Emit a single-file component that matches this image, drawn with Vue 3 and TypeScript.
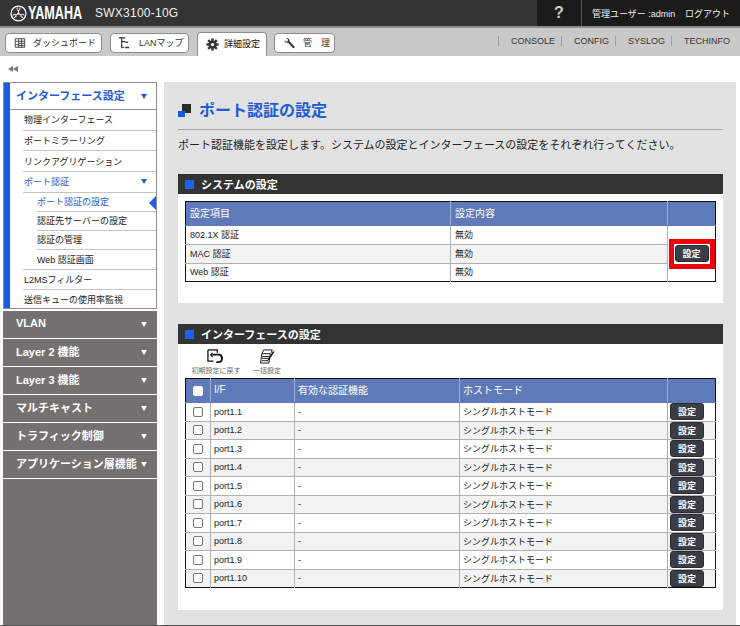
<script setup lang="ts">
const subItems = ['ポート認証の設定', '認証先サーバーの設定', '認証の管理', 'Web 認証画面']
const closedSections = ['VLAN', 'Layer 2 機能', 'Layer 3 機能', 'マルチキャスト', 'トラフィック制御', 'アプリケーション層機能']
const systemRows = [
  { name: '802.1X 認証', value: '無効' },
  { name: 'MAC 認証', value: '無効' },
  { name: 'Web 認証', value: '無効' },
]
const ports = Array.from({ length: 10 }, (_, i) => `port1.${i + 1}`)
const links = ['CONSOLE', 'CONFIG', 'SYSLOG', 'TECHINFO']
</script>

<template>
  <div class="app">
    <header class="top">
      <div class="brand">
        <svg class="emblem" viewBox="0 0 18 18" width="17" height="17">
          <circle cx="9" cy="9" r="7.9" fill="none" stroke="#fff" stroke-width="1.3" />
          <g stroke="#fff" stroke-width="1" fill="none">
            <g v-for="a in [0, 120, 240]" :key="a" :transform="`rotate(${a} 9 9)`">
              <path d="M9 9V5.5M7.6 2.6V5.2Q9 6.5 10.4 5.2V2.6" />
            </g>
          </g>
          <circle cx="9" cy="9" r="1.1" fill="#fff" />
        </svg>
        <span class="yamaha">YAMAHA</span>
        <span class="model">SWX3100-10G</span>
      </div>
      <div class="user">
        <span class="help">?</span>
        <span class="who">管理ユーザー :admin</span>
        <span class="logout">ログアウト</span>
      </div>
    </header>

    <nav class="tabs">
      <div class="tab t1">
        <svg viewBox="0 0 14 14" width="12" height="12"><path d="M1.5 2h11v10h-11zM5.5 2v10M9 2v10M5.5 5h7M5.5 7.5h7M5.5 10h7M1.5 5h4M1.5 9h4" fill="none" stroke="#333" stroke-width="1" /></svg>
        <span>ダッシュボード</span>
      </div>
      <div class="tab t2">
        <svg viewBox="0 0 14 14" width="13" height="13"><path d="M2 1h7M5 1v11M5 5h4M5 11h3" fill="none" stroke="#333" stroke-width="1.2" /><path d="M9 5h3v1.5H9zM9 10.500h4V12H9z" fill="#333" /></svg>
        <span>LANマップ</span>
      </div>
      <div class="tab t3">
        <svg viewBox="0 0 16 16" width="13" height="13">
          <g fill="#333">
            <rect v-for="a in [0, 45, 90, 135]" :key="a" x="6.5" y="0.500" width="3" height="15" :transform="`rotate(${a} 8 8)`" />
          </g>
          <circle cx="8" cy="8" r="4.8" fill="#333" />
          <circle cx="8" cy="8" r="2" fill="#fff" />
        </svg>
        <span>詳細設定</span>
      </div>
      <div class="tab t4">
        <svg viewBox="0 0 14 14" width="13" height="13"><path d="M1.500 3.500 3.500 5.200 5 4.600 5.300 2.800 3.500 1.200Q6 .6 6.800 3L7 4.500 12.800 10.800 11.300 12.500 5.400 6.300 3.800 6.300Q1.500 6 1.500 3.500Z" fill="#333" /></svg>
        <span>管　理</span>
      </div>
      <div class="links">
        <span v-for="l in links" :key="l" class="link">{{ l }}</span>
      </div>
    </nav>

    <div class="collapse"><i class="back"></i><i class="back"></i></div>

    <div class="body">
      <aside class="side">
        <section class="open">
          <div class="open-head"><span>インターフェース設定</span><i class="arrow blue"></i></div>
          <ul class="menu">
            <li>物理インターフェース</li>
            <li>ポートミラーリング</li>
            <li>リンクアグリゲーション</li>
            <li class="current"><span>ポート認証</span><i class="arrow small blue"></i></li>
            <li class="subwrap">
              <ul class="submenu">
                <li v-for="(s, i) in subItems" :key="s" :class="{ selected: i === 0 }">{{ s }}</li>
              </ul>
            </li>
            <li class="tail">L2MSフィルター</li>
            <li class="tail">送信キューの使用率監視</li>
          </ul>
        </section>
        <div v-for="s in closedSections" :key="s" class="closed">
          <span>{{ s }}</span><i class="arrow white"></i>
        </div>
        <div class="side-rest"></div>
      </aside>

      <main class="main">
        <div class="title">
          <span class="title-icon"><i></i><b></b></span>
          <h1>ポート認証の設定</h1>
        </div>
        <p class="desc">ポート認証機能を設定します。システムの設定とインターフェースの設定をそれぞれ行ってください。</p>

        <h2 class="bar"><i></i>システムの設定</h2>
        <div class="panel p1">
          <table class="grid sys">
            <colgroup><col class="c-a" /><col class="c-b" /><col class="c-act" /></colgroup>
            <thead>
              <tr><th>設定項目</th><th>設定内容</th><th></th></tr>
            </thead>
            <tbody>
              <tr v-for="(r, i) in systemRows" :key="r.name" :class="{ alt: i === 1 }">
                <td>{{ r.name }}</td>
                <td>{{ r.value }}</td>
                <td v-if="i === 0" rowspan="3" class="act">
                  <span class="hl"><button class="btn" type="button">設定</button></span>
                </td>
              </tr>
            </tbody>
          </table>
        </div>

        <h2 class="bar second"><i></i>インターフェースの設定</h2>
        <div class="panel p2">
          <div class="tools">
            <div class="tool tool-a">
              <svg viewBox="0 0 18 16" width="17" height="15">
                <path d="M2 1h10v3M2 1v12h6" fill="none" stroke="#111" stroke-width="1.4" />
                <path d="M7 6h7q3 .5 3 4t-4 4h-2" fill="none" stroke="#111" stroke-width="2" />
                <path d="M7 3.500V9L4 6z" fill="#111" />
              </svg>
              <span>初期設定に戻す</span>
            </div>
            <div class="tool tool-b">
              <svg viewBox="0 0 18 16" width="17" height="15">
                <path d="M3 5 5 1h9l-1 3M3 5 1.500 15h9L12 5zM3.500 8h7M3 10h7M2.800 12.500h7" fill="#fff" stroke="#111" stroke-width="1" />
                <path d="M16.500 3 11 11l-2 2 .5-3L15 2.500z" fill="#111" />
              </svg>
              <span>一括設定</span>
            </div>
          </div>
          <table class="grid ports">
            <colgroup><col class="c1" /><col class="c2" /><col class="c3" /><col class="c4" /><col class="c-act" /></colgroup>
            <thead>
              <tr>
                <th class="center"><input class="check head-check" type="checkbox" /></th>
                <th>I/F</th><th>有効な認証機能</th><th>ホストモード</th><th></th>
              </tr>
            </thead>
            <tbody>
              <tr v-for="(p, i) in ports" :key="p" :class="{ alt: i % 2 === 1 }">
                <td class="center"><input class="check" type="checkbox" /></td>
                <td>{{ p }}</td>
                <td>-</td>
                <td>シングルホストモード</td>
                <td class="btn-cell"><button class="btn" type="button">設定</button></td>
              </tr>
            </tbody>
          </table>
        </div>
      </main>
    </div>
  </div>
</template>

<style>
html, body { margin: 0; background: #fff; }
</style>

<style scoped>
.app {
  width: 740px;
  height: 626px;
  overflow: hidden;
  display: flex;
  flex-direction: column;
  box-sizing: border-box;
  border-bottom: 1px solid #555;
  font-family: "Liberation Sans", "Noto Sans CJK JP", sans-serif;
  font-size: 9px;
  color: #222;
  background: #fff;
}
i { display: block; }
.top {
  height: 26px;
  flex: none;
  display: flex;
  justify-content: space-between;
  background: #343434;
  border-bottom: 2px solid #8a8a8a;
}
.brand { display: flex; align-items: center; padding-left: 10px; }
.emblem { flex: none; margin-right: 1px; }
.yamaha {
  color: #fff;
  font-size: 18px;
  font-weight: 700;
  width: 54px;
  transform: scaleX(.7);
  transform-origin: left center;
  white-space: nowrap;
}
.model { color: #eee; font-size: 12px; margin-left: 13px; letter-spacing: .25px; }
.user {
  width: 203px;
  display: flex;
  align-items: center;
  background: #1b1b1b;
  color: #eee;
}
.help {
  width: 44px;
  line-height: 26px;
  text-align: center;
  border-right: 1px solid #555;
  font-size: 16px;
  font-weight: 700;
  color: #ccc;
}
.who { margin-left: 10px; width: 93px; white-space: nowrap; }
.tabs {
  height: 28px;
  flex: none;
  display: flex;
  background: #c9c9c9;
  padding-left: 5px;
  position: relative;
}
.tab {
  box-sizing: border-box;
  margin-top: 5px;
  height: 20px;
  display: flex;
  align-items: center;
  background: #fff;
  border: 1px solid #8c8c8c;
  border-radius: 4px;
  color: #333;
  white-space: nowrap;
}
.tab svg { flex: none; }
.tab span { margin-top: -2px; }
.t1 { width: 97px; padding-left: 8px; gap: 7px; }
.t2 { width: 79px; margin-left: 8px; padding-left: 6px; gap: 9px; }
.t3 {
  width: 70px;
  margin-left: 8px;
  margin-top: 4px;
  height: 24px;
  padding-left: 8px;
  gap: 5px;
  border-bottom: 0;
  border-radius: 4px 4px 0 0;
  color: #111;
}
.t4 { width: 61px; margin-left: 7px; padding-left: 8px; gap: 7px; }
.links { margin-left: auto; display: flex; align-items: center; padding-right: 10px; height: 25px; }
.link {
  padding-left: 12px;
  padding-right: 6px;
  border-left: 1px solid #999;
  line-height: 10px;
  color: #333;
}
.link:last-child { padding-right: 0; }
.collapse { height: 26px; flex: none; display: flex; align-items: center; padding-left: 8px; padding-bottom: 1px; box-sizing: border-box; }
.back {
  width: 0; height: 0;
  border-top: 3px solid transparent;
  border-bottom: 3px solid transparent;
  border-right: 5px solid #777;
}
.body { flex: 1; min-height: 0; display: flex; }
.side {
  width: 154px;
  margin-left: 3px;
  flex: none;
  display: flex;
  flex-direction: column;
}
.open {
  box-sizing: border-box;
  height: 227px;
  border: 1px solid #8f8f8f;
  position: relative;
  padding-left: 6px;
  background: #fff;
  margin-bottom: 2px;
}
.open::before {
  content: "";
  position: absolute;
  left: 0; top: 0; bottom: 0;
  width: 6px;
  background: #1a5ce6;
}
.open-head {
  display: flex;
  align-items: center;
  justify-content: space-between;
  padding: 0 9px 0 6px;
  font-size: 11px;
  font-weight: 700;
  color: #1d5cd8;
  border-bottom: 1px solid #8f8f8f;
  box-sizing: border-box;
  height: 27px;
}
.open-head span { margin-top: -2px; }
.arrow {
  flex: none;
  width: 0; height: 0;
  border-left: 3.500px solid transparent;
  border-right: 3.500px solid transparent;
  border-top: 5px solid #1a5ce6;
}
.arrow.white { border-top-color: #fff; }
ul { list-style: none; margin: 0; padding: 0; }
.menu { padding-left: 13px; }
.menu > li {
  height: 20.700px;
  box-sizing: border-box;
  display: flex;
  align-items: center;
  justify-content: space-between;
  padding: 0 9px 0 1px;
  border-bottom: 1px solid #c4c4c4;
  white-space: nowrap;
}
.menu > li.tail { height: 20px; }
.menu > li:last-child { border-bottom: 0; }
.menu > li.current { color: #1d5cd8; }
.menu > li.subwrap { height: auto; display: block; padding: 0; border-bottom: 1px solid #c4c4c4; }
.submenu { padding-left: 14px; }
.submenu li {
  height: 19px;
  box-sizing: border-box;
  display: flex;
  align-items: center;
  border-bottom: 1px solid #c4c4c4;
  position: relative;
}
.submenu li:last-child { border-bottom: 0; }
.submenu li.selected { color: #1d5cd8; }
.submenu li.selected::after {
  content: "";
  position: absolute;
  right: 0; top: 3px;
  border-top: 7px solid transparent;
  border-bottom: 7px solid transparent;
  border-right: 7px solid #1a5ce6;
}
.closed {
  box-sizing: border-box;
  height: 27px;
  margin-bottom: 1px;
  flex: none;
  display: flex;
  align-items: center;
  justify-content: space-between;
  padding: 0 10px 0 13px;
  background: #757170;
  color: #fff;
  font-size: 11px;
  font-weight: 700;
  white-space: nowrap;
}
.closed span { margin-top: -3px; }
.side-rest { flex: 1; background: #757170; }
.main {
  width: 572px;
  margin-left: 7px;
  flex: none;
  box-sizing: border-box;
  padding: 0 13px 0 14px;
  background: #e2e2e2;
}
.title {
  box-sizing: border-box;
  height: 48px;
  display: flex;
  align-items: center;
  border-bottom: 1px solid #a8a8a8;
  padding-top: 6px;
}
.title-icon { width: 13px; height: 13px; position: relative; margin: 4px 8px 0 0; flex: none; }
.title-icon i { position: absolute; right: 0; top: 0; width: 9px; height: 9px; background: #2a2a2a; }
.title-icon b { position: absolute; left: 0; bottom: 0; width: 7px; height: 6px; background: #1a5ce6; }
h1 { margin: 0; font-size: 16px; font-weight: 700; color: #1d5cd8; }
.desc { margin: 7px 0 0; height: 17px; line-height: 17px; font-size: 11px; color: #222; white-space: nowrap; }
.bar {
  margin: 20px 0 0;
  height: 20px;
  display: flex;
  align-items: center;
  padding: 0 0 1px 7px;
  background: #333;
  color: #fff;
  font-size: 11px;
  font-weight: 700;
  box-sizing: border-box;
}
.bar i { width: 9px; height: 9px; background: #1a62f0; margin: 1px 7px 0 0; }
.bar.second { margin-top: 21px; }
.panel { background: #fff; padding: 7px 7px 0; box-sizing: border-box; }
.p1 { height: 109px; }
.p2 { height: 266px; padding-top: 0; }
.grid {
  width: 530px;
  table-layout: fixed;
  border-collapse: collapse;
  border: 1px solid #111;
  background: #fff;
}
.c-a { width: 265px; }
.c-b { width: 217px; }
.c-act { width: 48px; }
.c1 { width: 25px; }
.c2 { width: 84px; }
.c3 { width: 165px; }
.c4 { width: 208px; }
th {
  box-sizing: border-box;
  height: 24px;
  padding: 0 4px 2px;
  background: #5f7ab8;
  color: #fff;
  font-size: 10px;
  font-weight: 400;
  text-align: left;
  border-left: 1px solid #9fb0d6;
  border-bottom: 1px solid #5f7ab8;
}
th:first-child { border-left: 0; }
td {
  height: 18.500px;
  padding: 0 4px 1px;
  font-size: 9px;
  color: #222;
  border-top: 1px solid #b0b0b0;
  border-left: 1px solid #b0b0b0;
  box-sizing: border-box;
  white-space: nowrap;
}
.sys td { height: 18.800px; }
td:first-child { border-left: 0; }
.ports th { padding: 0 3px 2px; }
.ports td { padding: 0 3px; }
.alt td { background: #f2f2f2; }
.alt td.act { background: #fff; }
.ports .center { text-align: center; padding: 0; }
.ports td.btn-cell { padding: 0 0 0 2px; }
td.act { padding: 0; text-align: center; background: #fff; }
.hl {
  display: inline-flex;
  box-sizing: border-box;
  width: 46px;
  height: 30px;
  border: 5px solid #ee0010;
  align-items: center;
  justify-content: center;
  vertical-align: middle;
}
.btn {
  width: 34px;
  height: 17px;
  padding: 0;
  border: 1px solid #2a2c33;
  border-radius: 3px;
  background: #3a3d46;
  color: #fff;
  font: 700 9px "Liberation Sans", "Noto Sans CJK JP", sans-serif;
  display: block;
}
.check {
  appearance: none;
  box-sizing: border-box;
  display: block;
  width: 10px;
  height: 10px;
  margin: 0 auto;
  background: #fff;
  border: 1px solid #777;
  border-radius: 2px;
}
.head-check { border-color: #fff; }
.tools { height: 34px; display: flex; color: #666; font-size: 7px; }
.tool { display: flex; flex-direction: column; align-items: center; white-space: nowrap; }
.tool svg { margin-top: 5px; flex: none; }
.tool-a svg { margin-right: 3px; }
.tool-b svg { margin-left: 1px; }
.tool span { margin-top: 2px; line-height: 9px; }
.tool-a { width: 48px; margin-left: 7px; }
.tool-b { width: 28px; margin-left: 13px; }
</style>
